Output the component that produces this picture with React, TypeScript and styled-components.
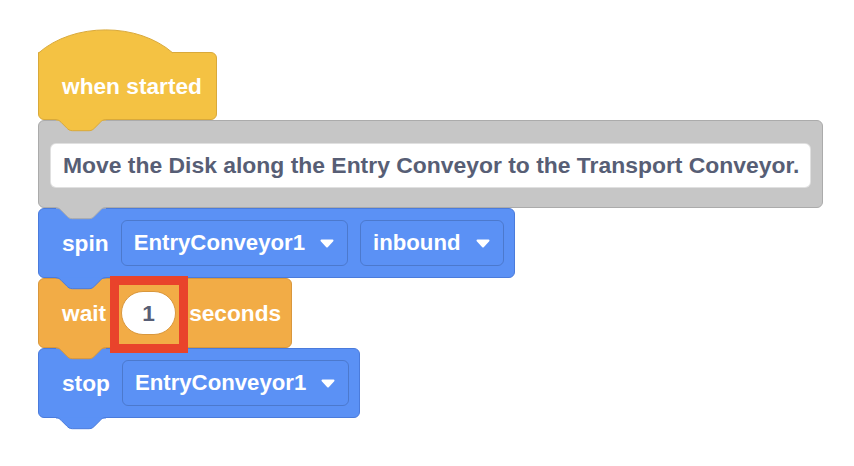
import React from "react";
import styled, { createGlobalStyle } from "styled-components";

const GlobalStyle = createGlobalStyle`
  html, body { margin: 0; padding: 0; background: #ffffff; }
  body { font-family: "Liberation Sans", Arial, Helvetica, sans-serif; }
`;

const palettes = {
  event: { fill: "#F4C243", stroke: "#D9A93A" },
  comment: { fill: "#C6C6C6", stroke: "#ABABAB" },
  motion: { fill: "#5B91F5", stroke: "#4A7BDC" },
  control: { fill: "#F2AC46", stroke: "#D9973C" },
};

type Pal = { fill: string; stroke: string };

const Workspace = styled.div`
  display: flex;
  flex-direction: column;
  align-items: flex-start;
  padding: 28px 0 40px 38px;
`;

const HatStack = styled.div`
  display: flex;
  flex-direction: column;
  align-items: flex-start;
`;

const HatCap = styled.svg`
  display: block;
  position: relative;
  z-index: 1;
  margin-bottom: -2px;
`;

const Block = styled.div<{ $pal: Pal; $hat?: boolean; $h?: number }>`
  position: relative;
  box-sizing: border-box;
  display: flex;
  align-items: center;
  gap: 12px;
  min-height: ${(p) => p.$h ?? 70}px;
  padding: 0 10px 0 23px;
  background: ${(p) => p.$pal.fill};
  border: 1px solid ${(p) => p.$pal.stroke};
  border-radius: ${(p) => (p.$hat ? "0 6px 6px 6px" : "6px")};
  color: #ffffff;
  font-weight: 700;
  font-size: 22.7px;
  line-height: 1;
  white-space: nowrap;
`;

const HatBody = styled(Block)`
  padding-right: 14px;
`;

const CommentBlock = styled(Block)`
  padding: 22px 11px 19px 11px;
  font-size: 22.9px;
`;

const TabSvg = styled.svg`
  position: absolute;
  top: 100%;
  left: 16px;
  z-index: 2;
  overflow: visible;
`;

const Label = styled.span`
  display: block;
`;

const CommentField = styled.div`
  box-sizing: border-box;
  display: flex;
  align-items: center;
  height: 45px;
  padding: 0 11px 0 12px;
  background: #ffffff;
  border: 1px solid rgba(0, 0, 0, 0.12);
  border-radius: 6px;
  color: #575e75;
`;

const Dropdown = styled.div`
  box-sizing: border-box;
  display: flex;
  align-items: center;
  gap: 15px;
  height: 46px;
  padding: 0 13px 0 12px;
  border: 1px solid rgba(0, 0, 0, 0.16);
  border-radius: 6px;
  font-size: 22.2px;
`;

const OvalWrap = styled.div`
  position: relative;
  display: flex;
  margin: 0 1px 0 3px;
`;

const Oval = styled.div`
  box-sizing: border-box;
  display: flex;
  align-items: center;
  justify-content: center;
  width: 55px;
  height: 44px;
  background: #ffffff;
  border: 1px solid #d9973c;
  border-radius: 22px;
  color: #575e75;
`;

const Highlight = styled.div`
  position: absolute;
  z-index: 5;
  left: -11px;
  right: -12px;
  top: -15px;
  bottom: -18px;
  border: 9px solid #e9432b;
  pointer-events: none;
`;

const TAB =
  "M0.5,0.5 c2.8,0 4.2,1.4 5.6,2.8 l5.6,5.6 c1.4,1.4 2.8,2.8 5.6,2.8 h16.8 c2.8,0 4.2,-1.4 5.6,-2.8 l5.6,-5.6 c1.4,-1.4 2.8,-2.8 5.6,-2.8";

const Tab: React.FC<{ pal: Pal }> = ({ pal }) => (
  <TabSvg width="52" height="13" viewBox="0 0 52 13">
    <rect x="1" y="0" width="50" height="1.5" fill={pal.fill} />
    <path d={TAB} fill={pal.fill} stroke={pal.stroke} strokeWidth="1" />
  </TabSvg>
);

const Arrow: React.FC = () => (
  <svg width="14" height="9" viewBox="0 0 14 9">
    <path
      d="M1.5,1.5 H12.5 L7,7.5 Z"
      fill="#ffffff"
      stroke="#ffffff"
      strokeWidth="2"
      strokeLinejoin="round"
    />
  </svg>
);

const Select: React.FC<{ value: string }> = ({ value }) => (
  <Dropdown>
    <Label>{value}</Label>
    <Arrow />
  </Dropdown>
);

export default function App() {
  const ev = palettes.event;
  return (
    <>
      <GlobalStyle />
      <Workspace>
        <HatStack>
          <HatCap width="136" height="26" viewBox="0 0 136 26">
            <path
              d="M0.5,26 V25 C35.5,-5.8 99.9,-5.8 134.9,25 V26 Z"
              fill={ev.fill}
            />
            <path
              d="M0.5,26 V25 C35.5,-5.8 99.9,-5.8 134.9,25"
              fill="none"
              stroke={ev.stroke}
              strokeWidth="1"
            />
          </HatCap>
          <HatBody $pal={ev} $hat $h={68}>
            <Label>when started</Label>
            <Tab pal={ev} />
          </HatBody>
        </HatStack>
        <CommentBlock $pal={palettes.comment}>
          <CommentField>
            <Label>Move the Disk along the Entry Conveyor to the Transport Conveyor.</Label>
          </CommentField>
          <Tab pal={palettes.comment} />
        </CommentBlock>
        <Block $pal={palettes.motion}>
          <Label>spin</Label>
          <Select value="EntryConveyor1" />
          <Select value="inbound" />
          <Tab pal={palettes.motion} />
        </Block>
        <Block $pal={palettes.control}>
          <Label>wait</Label>
          <OvalWrap>
            <Oval>1</Oval>
            <Highlight />
          </OvalWrap>
          <Label>seconds</Label>
          <Tab pal={palettes.control} />
        </Block>
        <Block $pal={palettes.motion}>
          <Label>stop</Label>
          <Select value="EntryConveyor1" />
          <Tab pal={palettes.motion} />
        </Block>
      </Workspace>
    </>
  );
}
